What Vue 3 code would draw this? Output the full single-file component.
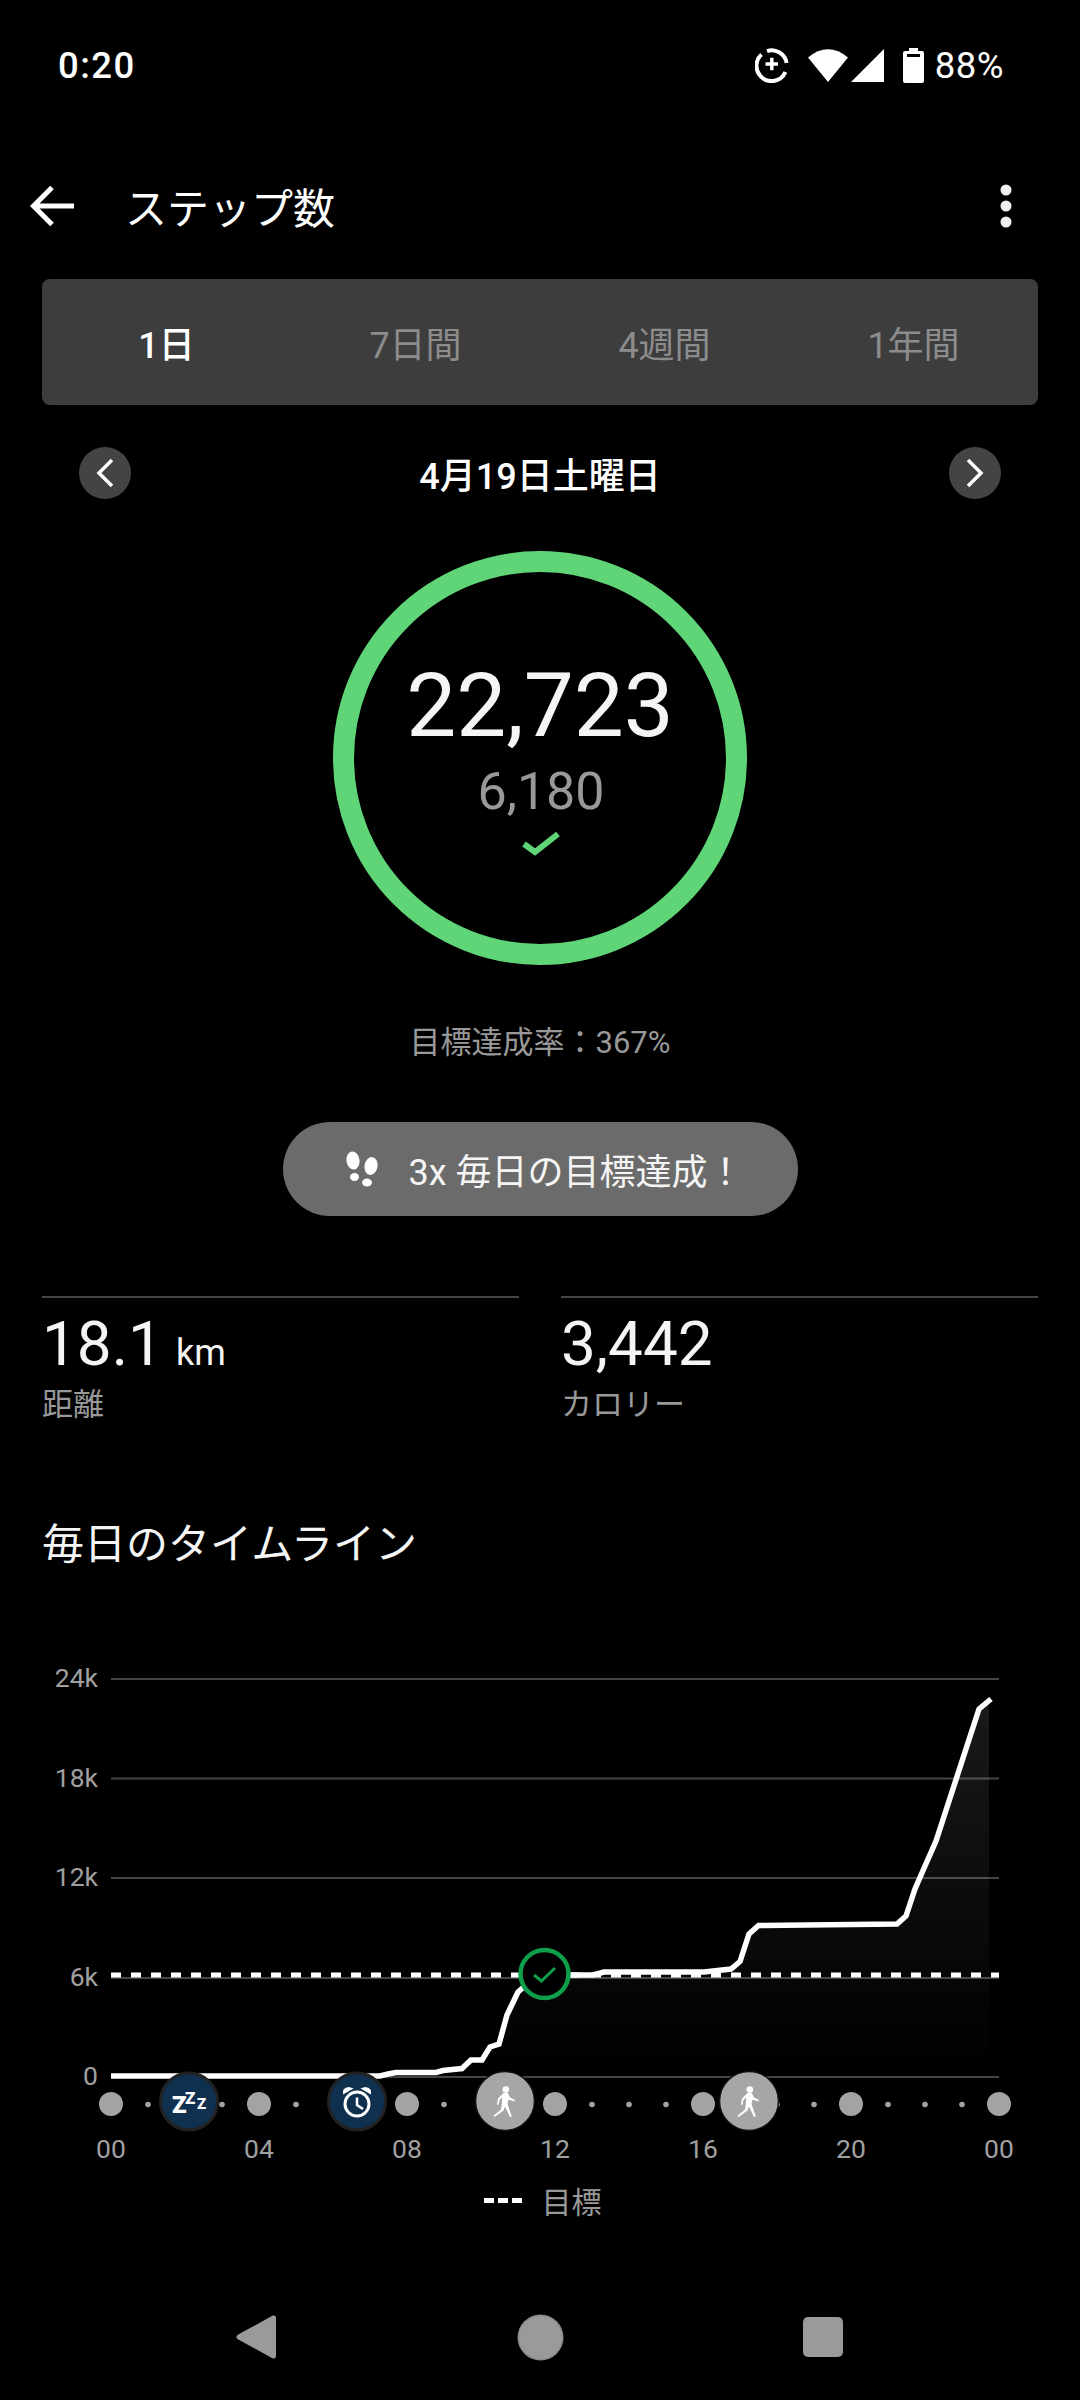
<template>
  <div class="page">
    <div class="status">
      <span class="time">0:20</span>
      <div class="status-icons">
        <svg class="saver" width="34" height="35" viewBox="0 0 34 35">
          <path d="M12 3.200A15 15 0 0 1 31.600 15M30.400 24A15 15 0 0 1 5 27.500A15 15 0 0 1 6.500 6.600" fill="none" stroke="#fff" stroke-width="4" />
          <path d="M10.500 16h12.500M16.800 9.800v12.500" stroke="#fff" stroke-width="3.400" />
        </svg>
        <svg class="wifi" width="40" height="34" viewBox="0 0 40 34">
          <path d="M0 9.500Q20 -7 40 9.500L20 34Z" fill="#fff" />
        </svg>
        <svg class="signal" width="33" height="33" viewBox="0 0 33 33">
          <path d="M33 0V33H0Z" fill="#fff" />
        </svg>
        <svg class="battery" width="21" height="35" viewBox="0 0 21 35">
          <path d="M6 0h9v3h4a2 2 0 0 1 2 2v28a2 2 0 0 1-2 2H2a2 2 0 0 1-2-2V5a2 2 0 0 1 2-2h4Z" fill="#fff" />
          <rect x="4" y="6" width="13" height="3" fill="#000" />
        </svg>
        <span class="percent">88%</span>
      </div>
    </div>

    <div class="toolbar">
      <svg width="44" height="42" viewBox="0 0 44 42" class="back">
        <path d="M44 21H5M22 2.500L3.500 21L22 39.500" fill="none" stroke="#fff" stroke-width="5" />
      </svg>
      <h1 class="title">ステップ数</h1>
      <svg width="12" height="44" viewBox="0 0 12 44" class="more">
        <circle cx="6" cy="6" r="5.500" fill="#f0f0f0" />
        <circle cx="6" cy="22" r="5.500" fill="#f0f0f0" />
        <circle cx="6" cy="38" r="5.500" fill="#f0f0f0" />
      </svg>
    </div>

    <div class="tabs">
      <div v-for="(tab, i) in tabs" :key="tab" class="tab" :class="{ active: i === 0 }">{{ tab }}</div>
    </div>

    <div class="date-row">
      <div class="arrow-btn">
        <svg width="20" height="30" viewBox="0 0 20 30"><path d="M17 2L4 15L17 28" fill="none" stroke="#fff" stroke-width="3.500" /></svg>
      </div>
      <div class="date">4月19日土曜日</div>
      <div class="arrow-btn">
        <svg width="20" height="30" viewBox="0 0 20 30"><path d="M3 2L16 15L3 28" fill="none" stroke="#fff" stroke-width="3.500" /></svg>
      </div>
    </div>

    <div class="ring">
      <div class="steps">22,723</div>
      <div class="goal">6,180</div>
      <svg class="ring-check" width="38" height="26" viewBox="0 0 38 26">
        <path d="M2 13L13 21L36 3" fill="none" stroke="#5fd578" stroke-width="6" />
      </svg>
    </div>

    <div class="rate">目標達成率：367%</div>

    <div class="pill">
      <svg width="34" height="36" viewBox="0 0 34 36">
        <g fill="#fff">
          <ellipse cx="8" cy="9.500" rx="6.500" ry="9" transform="rotate(-8 8 9.500)" />
          <ellipse cx="9.500" cy="26" rx="4.500" ry="4" />
          <ellipse cx="26" cy="15" rx="6.500" ry="9" transform="rotate(10 26 15)" />
          <ellipse cx="22" cy="31.500" rx="5" ry="4" />
        </g>
      </svg>
      <span>3x 毎日の目標達成！</span>
    </div>

    <div class="stats">
      <div class="stat">
        <div class="stat-value">18.1<small>km</small></div>
        <div class="stat-label">距離</div>
      </div>
      <div class="stat">
        <div class="stat-value">3,442</div>
        <div class="stat-label">カロリー</div>
      </div>
    </div>

    <h2 class="heading">毎日のタイムライン</h2>

    <svg class="chart" width="1080" height="530" viewBox="0 1640 1080 530">
      <defs>
        <linearGradient id="areaFill" x1="0" y1="1699" x2="0" y2="2077" gradientUnits="userSpaceOnUse">
          <stop offset="0" stop-color="#fff" stop-opacity="0.1" />
          <stop offset="1" stop-color="#fff" stop-opacity="0" />
        </linearGradient>
      </defs>

      <g v-for="row in gridRows" :key="row.label">
        <line x1="111" x2="999" :y1="row.y" :y2="row.y" stroke="#444" stroke-width="2" />
        <text x="98" :y="row.y + 8" text-anchor="end" class="axis">{{ row.label }}</text>
      </g>

      <path :d="areaPath" fill="url(#areaFill)" />
      <line x1="111" x2="999" y1="1975" y2="1975" stroke="#fff" stroke-width="5" stroke-dasharray="10 10" />
      <path :d="linePath" fill="none" stroke="#fff" stroke-width="5.500" />

      <circle cx="544.500" cy="1974" r="24" fill="#000" stroke="#0e9f4b" stroke-width="4.500" />
      <path d="M534 1975L541.500 1981L555 1968" fill="none" stroke="#0e9f4b" stroke-width="3" />

      <circle v-for="x in smallDots" :key="x" :cx="x" cy="2104.500" r="2.800" fill="#a3a3a3" />
      <g v-for="(x, i) in hourDots" :key="'h' + i">
        <circle :cx="x" cy="2104" r="12" fill="#a3a3a3" />
        <text :x="x" y="2158" text-anchor="middle" class="axis">{{ hours[i] }}</text>
      </g>

      <g transform="translate(189 2101.500)">
        <circle r="28.500" fill="#10304f" stroke="#222" stroke-width="3" />
        <text x="-17" y="11" class="zzz z1">Z</text>
        <text x="-4" y="2.500" class="zzz z2">Z</text>
        <text x="8" y="7.500" class="zzz z3">Z</text>
      </g>

      <g transform="translate(357 2101.500)">
        <circle r="28.500" fill="#10304f" stroke="#222" stroke-width="3" />
        <circle cy="2.500" r="12" fill="none" stroke="#fff" stroke-width="3" />
        <path d="M0 -4V3.500L6 7.500" fill="none" stroke="#fff" stroke-width="2.500" />
        <path d="M-14 -7Q-15.500 -14 -8 -14.500L-3.500 -13Z" fill="#fff" />
        <path d="M14 -7Q15.500 -14 8 -14.500L3.500 -13Z" fill="#fff" />
      </g>

      <g v-for="x in walkers" :key="x" :transform="`translate(${x} 2101)`">
        <circle r="29.500" fill="#a6a6a6" stroke="#111" stroke-width="1.500" />
        <circle cx="0.800" cy="-11.500" r="3.300" fill="#fff" />
        <path d="M-1.500 -8L2.500 -8.500L5 -3.500L10 -1L9.500 0.500L3.500 -1.500L2.500 3L6.800 15.500L5 16L0 5.500L-1.500 9.500L-10.500 16L-11.500 14.800L-4 8.500L-3 2L-2.800 -3.500L-5.500 -1L-6.500 4L-8 3.500L-7 -2.500Z" fill="#fff" />
      </g>
    </svg>

    <div class="legend">
      <span class="legend-dashes"><i></i><i></i><i></i></span>
      <span>目標</span>
    </div>

    <div class="nav">
      <svg width="41" height="44" viewBox="0 0 41 44">
        <polygon points="37.500,3 37.500,41 3,22" fill="#9a9a9a" stroke="#9a9a9a" stroke-width="5" stroke-linejoin="round" />
      </svg>
      <svg width="47" height="47" viewBox="0 0 47 47">
        <circle cx="23.500" cy="23.500" r="23" fill="#8a8a8a" />
        <circle cx="23.500" cy="23.500" r="21.500" fill="#9a9a9a" />
      </svg>
      <div class="nav-square"></div>
    </div>
  </div>
</template>

<script setup>
const tabs = ['1日', '7日間', '4週間', '1年間']
const hours = ['00', '04', '08', '12', '16', '20', '00']

const gridRows = [
  { label: '24k', y: 1679 },
  { label: '18k', y: 1778.5 },
  { label: '12k', y: 1878 },
  { label: '6k', y: 1978 },
  { label: '0', y: 2077 }
]

const hourDots = hours.map((_, i) => 111 + i * 148)
const smallDots = Array.from({ length: 25 }, (_, i) => 111 + i * 37).filter((_, i) => i % 4 !== 0)
const walkers = [505, 749]

// steps curve, traced in page pixels
const curve = [
  [111, 2076], [380, 2076], [388, 2074], [396, 2072.5], [436, 2072.5], [443, 2070.5],
  [462, 2068.6], [471, 2060], [482, 2060], [490, 2047], [499, 2044], [507, 2015],
  [518, 1992], [525, 1986], [545, 1975], [593, 1975], [604, 1972], [704, 1972],
  [731, 1969], [740, 1961.5], [749, 1934], [758.5, 1925.5], [897, 1924], [906, 1916],
  [915, 1889], [925, 1866], [936, 1841], [979, 1709], [991, 1699]
]
const linePath = 'M' + curve.map(p => p.join(' ')).join('L')
const areaPath = linePath + 'L989 1700L989 2077L111 2077Z'
</script>

<style>
html, body {
  margin: 0;
  background: #000;
}
</style>

<style scoped>
.page {
  width: 1080px;
  height: 2400px;
  overflow: hidden;
  background: #000;
  color: #fff;
  font-family: Roboto, "Noto Sans CJK JP", sans-serif;
}

.status {
  height: 130px;
  padding: 0 76px 0 58px;
  display: flex;
  align-items: center;
  justify-content: space-between;
  box-sizing: border-box;
}

.time, .percent {
  font-size: 36.500px;
  font-weight: 500;
}

.time {
  letter-spacing: 1.500px;
}

.percent {
  letter-spacing: 0.500px;
  font-weight: 400;
  margin-left: 11px;
}

.status-icons {
  display: flex;
  align-items: center;
}

.wifi {
  margin-left: 19px;
}

.signal {
  margin-left: 3px;
}

.battery {
  margin-left: 19px;
}

.toolbar {
  height: 149px;
  box-sizing: border-box;
  padding: 2px 68px 0 30px;
  display: flex;
  align-items: center;
}

.title {
  margin: 0 0 0 51px;
  font-size: 42px;
  font-weight: 400;
  flex: 1;
}

.tabs {
  margin: 0 42px;
  height: 126px;
  border-radius: 8px;
  background: #3d3d3d;
  display: grid;
  grid-template-columns: repeat(4, 1fr);
  align-items: center;
  text-align: center;
  font-size: 36px;
  color: #8c8c8c;
}

.tab.active {
  color: #fff;
  font-weight: 500;
}

.date-row {
  margin-top: 42px;
  padding: 0 79px;
  height: 52px;
  display: flex;
  align-items: center;
  justify-content: space-between;
}

.arrow-btn {
  width: 52px;
  height: 52px;
  border-radius: 50%;
  background: #444;
  display: flex;
  align-items: center;
  justify-content: center;
}

.date {
  font-size: 36px;
  font-weight: 500;
}

.ring {
  margin: 52px auto 0;
  width: 414px;
  height: 414px;
  box-sizing: border-box;
  border: 21px solid #5fd578;
  border-radius: 50%;
  padding-top: 91px;
  display: flex;
  flex-direction: column;
  align-items: center;
}

.steps {
  font-size: 89px;
  line-height: 86px;
  color: #f5f5f5;
}

.goal {
  margin: 18px 0 0 2px;
  font-size: 52px;
  line-height: 50px;
  color: #999;
}

.ring-check {
  margin: 14px 0 0 2px;
}

.rate {
  margin-top: 58px;
  line-height: 40px;
  font-size: 31px;
  text-align: center;
  color: #999;
}

.pill {
  margin: 59px auto 0;
  width: 515px;
  height: 94px;
  border-radius: 47px;
  background: #6b6b6b;
  box-sizing: border-box;
  padding-left: 62px;
  display: flex;
  align-items: center;
  gap: 30px;
  font-size: 36px;
  color: #f5f5f5;
}

.stats {
  margin-top: 80px;
  padding: 0 42px;
  display: grid;
  grid-template-columns: 1fr 1fr;
  gap: 42px;
}

.stat {
  border-top: 2px solid #444;
  padding-top: 15px;
}

.stat-value {
  font-size: 62px;
  line-height: 62px;
  color: #f5f5f5;
}

.stat-value small {
  font-size: 36px;
  line-height: 1;
  margin-left: 13px;
}

.stat-label {
  margin-top: 10px;
  font-size: 31px;
  line-height: 40px;
  color: #999;
}

.heading {
  margin: 92px 42px 0;
  font-size: 42px;
  line-height: 56px;
  font-weight: 400;
  color: #f5f5f5;
}

.chart {
  display: block;
  margin-top: 67px;
}

.axis {
  font-size: 26.500px;
  fill: #a0a0a0;
}

.zzz {
  font-weight: 900;
  fill: #fff;
}

.z1 {
  font-size: 24px;
}

.z2 {
  font-size: 17px;
}

.z3 {
  font-size: 15px;
}

.legend {
  margin-top: 10px;
  height: 40px;
  padding-left: 5px;
  display: flex;
  align-items: center;
  justify-content: center;
  gap: 20px;
  font-size: 30px;
  color: #999;
}

.legend-dashes {
  display: flex;
  gap: 4px;
}

.legend-dashes i {
  width: 10px;
  height: 5px;
  background: #fff;
}

.nav {
  margin-top: 67px;
  padding: 0 237px 0 236px;
  height: 100px;
  display: flex;
  align-items: center;
  justify-content: space-between;
}

.nav-square {
  width: 40px;
  height: 40px;
  border-radius: 5px;
  background: #9a9a9a;
}
</style>
